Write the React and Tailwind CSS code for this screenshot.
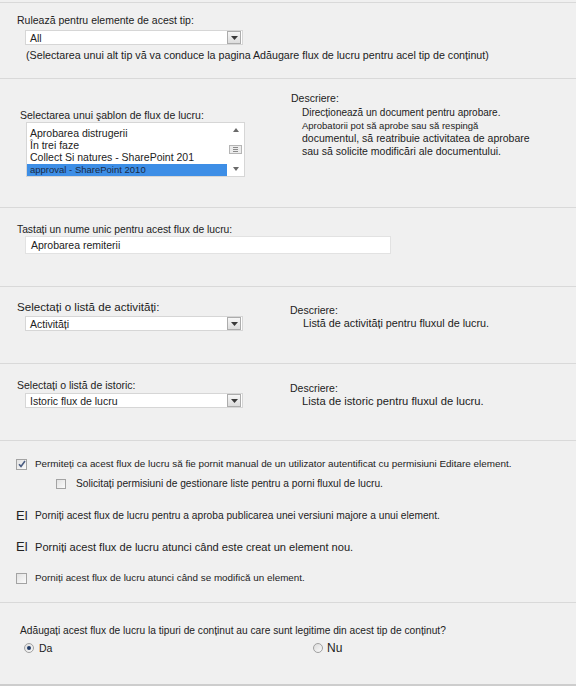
import React from "react";

const Arrow = () => (
  <span className="flex h-[13px] w-[14px] items-center justify-center border border-[#acacac] bg-linear-to-b from-[#f7f7f7] to-[#dcdcdc]">
    <svg width="7" height="4" viewBox="0 0 7 4">
      <path d="M0 0h7L3.5 4z" fill="#3a3a3a" />
    </svg>
  </span>
);

const Select = ({ value, className = "" }) => (
  <div
    className={`flex h-[15px] w-[218px] items-center justify-between border border-[#d6d6d6] bg-white pl-[4px] pr-px ${className}`}
  >
    <span className="text-[10.5px] leading-[12px]">{value}</span>
    <Arrow />
  </div>
);

const Checkbox = ({ checked, size = "h-[11px] w-[11px]" }) => (
  <span
    className={`flex ${size} shrink-0 items-center justify-center border border-[#a3a3a3] bg-linear-to-br from-[#e2e2e2] to-[#fbfbfb]`}
  >
    {checked && (
      <svg width="8" height="8" viewBox="0 0 8 8">
        <path d="M1 4.2l2 2.2L7 1" fill="none" stroke="#4a5d82" strokeWidth="1.6" />
      </svg>
    )}
  </span>
);

const Radio = ({ checked }) => (
  <span className="flex h-[10px] w-[10px] shrink-0 items-center justify-center rounded-full border border-[#a0a0a0] bg-linear-to-br from-[#dcdcdc] to-[#fafafa]">
    {checked && <span className="h-[4px] w-[4px] rounded-full bg-[#1f3a66]" />}
  </span>
);

const templates = [
  "Aprobarea distrugerii",
  "În trei faze",
  "Collect Si natures - SharePoint 201",
];

export default function App() {
  return (
    <div className="h-[686px] w-full overflow-hidden bg-[#f0f0f0] pt-[2px] font-['Liberation_Sans',Arial,sans-serif] text-[10.5px] leading-[12px] text-[#222]">
      {/* tip de continut */}
      <section className="h-[77px] border-y border-[#d9d9d9] pl-[17px] pt-[11px]">
        <p>Rulează pentru elemente de acest tip:</p>
        <Select value="All" className="ml-[8px] mt-[4px]" />
        <p className="ml-[9px] mt-[4px] text-[10.7px]">
          (Selectarea unui alt tip vă va conduce la pagina Adăugare flux de lucru pentru acel tip de conținut)
        </p>
      </section>

      {/* sablon */}
      <section className="flex h-[129px] border-b border-[#d9d9d9]">
        <div className="w-[291px] pl-[20px] pt-[30px]">
          <p>Selectarea unui şablon de flux de lucru:</p>
          <div className="ml-[6px] mt-[1px] flex h-[55px] w-[219px] border border-[#d6d6d6] bg-white">
            <div className="flex-1 pt-[4px] text-[10.5px] leading-[12px]">
              {templates.map((t) => (
                <div key={t} className="pl-[3px]">
                  {t}
                </div>
              ))}
              <div className="mt-px h-[12px] bg-[#3d8ee6] pl-[3px] text-[9.5px] leading-[12px] text-[#1b2a44]">
                approval - SharePoint 2010
              </div>
            </div>
            <div className="flex w-[17px] flex-col items-center justify-between py-[5px]">
              <svg width="6" height="4" viewBox="0 0 6 4">
                <path d="M0 4L3 0l3 4z" fill="#6a6a6a" />
              </svg>
              <span className="flex h-[9px] w-[13px] flex-col justify-center gap-px border border-[#b5b5b5] bg-[#ececec] px-[3px]">
                <span className="h-px bg-[#8a8a8a]" />
                <span className="h-px bg-[#8a8a8a]" />
                <span className="h-px bg-[#8a8a8a]" />
              </span>
              <svg width="6" height="4" viewBox="0 0 6 4">
                <path d="M0 0h6L3 4z" fill="#6a6a6a" />
              </svg>
            </div>
          </div>
        </div>
        <div className="pt-[13px]">
          <p>Descriere:</p>
          <div className="mt-[2px] pl-[11px] leading-[13px]">
            <p className="text-[10px]">Direcționează un document pentru aprobare.</p>
            <p className="text-[9.5px]">Aprobatorii pot să aprobe sau să respingă</p>
            <p>documentul, să reatribuie activitatea de aprobare</p>
            <p>sau să solicite modificări ale documentului.</p>
          </div>
        </div>
      </section>

      {/* nume */}
      <section className="h-[79px] border-b border-[#d9d9d9] pl-[17px] pt-[16px]">
        <p className="text-[10.3px]">Tastați un nume unic pentru acest flux de lucru:</p>
        <div className="ml-[8px] flex h-[18px] w-[366px] items-center border border-[#e2e2e2] bg-white pl-[5px]">
          Aprobarea remiterii
        </div>
      </section>

      {/* activitati */}
      <section className="flex h-[77px] border-b border-[#d9d9d9]">
        <div className="w-[290px] pl-[17px] pt-[13px]">
          <p className="text-[11.6px] leading-[14px]">Selectați o listă de activități:</p>
          <Select value="Activități" className="ml-[8px] mt-[2px]" />
        </div>
        <div className="pt-[17px]">
          <p>Descriere:</p>
          <p className="mt-px pl-[13px] text-[10.8px]">Listă de activități pentru fluxul de lucru.</p>
        </div>
      </section>

      {/* istoric */}
      <section className="flex h-[77px] border-b border-[#d9d9d9]">
        <div className="w-[290px] pl-[17px] pt-[15px]">
          <p>Selectați o listă de istoric:</p>
          <Select value="Istoric flux de lucru" className="ml-[8px] mt-[2px]" />
        </div>
        <div className="pt-[18px]">
          <p>Descriere:</p>
          <p className="mt-px pl-[12px] text-[11.2px]">Lista de istoric pentru fluxul de lucru.</p>
        </div>
      </section>

      {/* optiuni pornire */}
      <section className="h-[162px] border-b border-[#d9d9d9] pl-[16px] pt-[17px]">
        <div className="flex h-[12px] items-center gap-[8px]">
          <Checkbox checked />
          <span className="text-[9.9px]">
            Permiteți ca acest flux de lucru să fie pornit manual de un utilizator autentificat cu permisiuni Editare element.
          </span>
        </div>
        <div className="ml-[40px] mt-[8px] flex h-[12px] items-center gap-[10px]">
          <Checkbox size="h-[10px] w-[10px]" />
          <span className="text-[10.2px]">Solicitați permisiuni de gestionare liste pentru a porni fluxul de lucru.</span>
        </div>
        <div className="mt-[19px] flex h-[14px] items-center">
          <span className="w-[19px] text-[13px] leading-[14px]">El</span>
          <span className="text-[10.2px]">
            Porniți acest flux de lucru pentru a aproba publicarea unei versiuni majore a unui element.
          </span>
        </div>
        <div className="mt-[17px] flex h-[14px] items-center">
          <span className="w-[19px] text-[13px] leading-[14px]">El</span>
          <span className="text-[11.1px]">Porniți acest flux de lucru atunci când este creat un element nou.</span>
        </div>
        <div className="mt-[18px] flex h-[12px] items-center gap-[8px]">
          <Checkbox />
          <span className="text-[9.85px]">Porniți acest flux de lucru atunci când se modifică un element.</span>
        </div>
      </section>

      {/* tipuri de continut */}
      <section className="h-[83px] border-b-2 border-[#cdcdcd] pl-[20px] pt-[22px]">
        <p className="text-[10.2px]">
          Adăugați acest flux de lucru la tipuri de conținut au care sunt legitime din acest tip de conținut?
        </p>
        <div className="mt-[5px] flex h-[12px] items-center">
          <label className="ml-[4px] flex w-[289px] items-center gap-[5px]">
            <Radio checked />
            <span>Da</span>
          </label>
          <label className="flex items-center gap-[4px]">
            <Radio />
            <span className="text-[12px]">Nu</span>
          </label>
        </div>
      </section>
    </div>
  );
}
